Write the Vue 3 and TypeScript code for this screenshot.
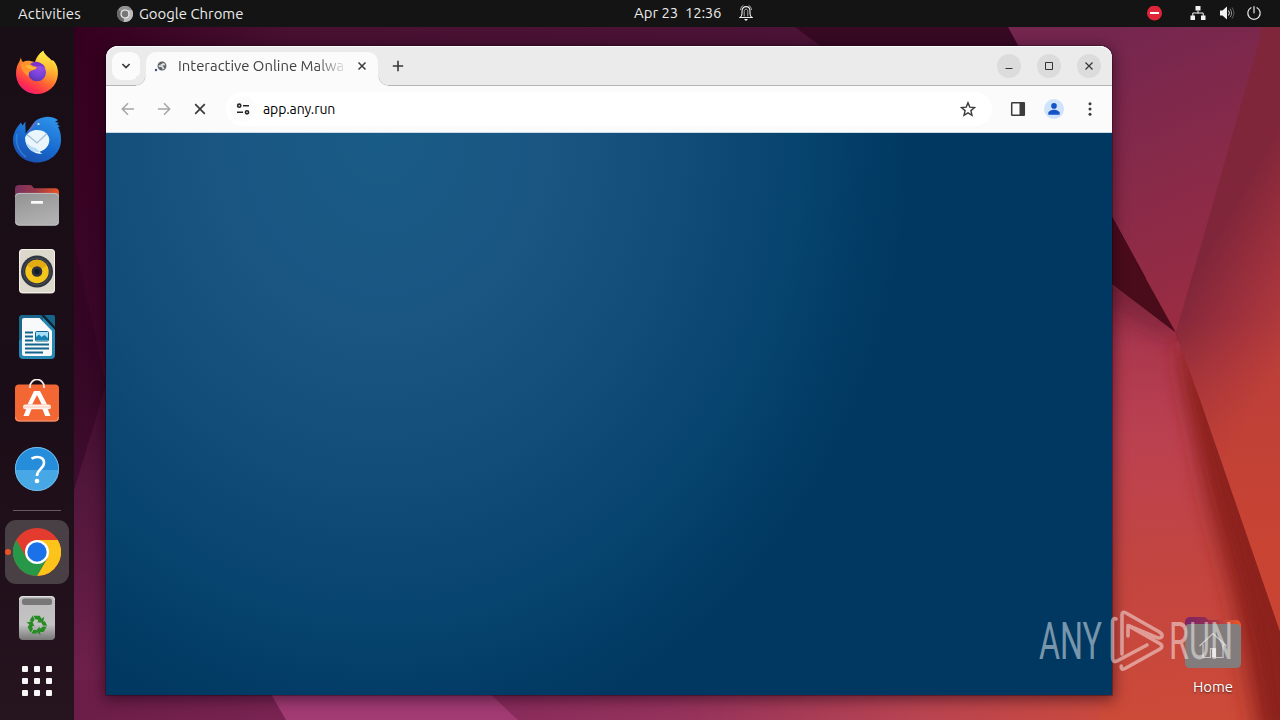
<script setup lang="ts">
interface Shade {
  offset: string
  color: string
}

const clock = { date: 'Apr 23', time: '12:36' }
const appName = 'Google Chrome'
const tabTitle = 'Interactive Online Malwa'
const address = 'app.any.run'

const topStrip: Shade[] = [
  { offset: '0', color: '#35001f' },
  { offset: '0.3', color: '#481031' },
  { offset: '1', color: '#4b1436' },
]
const bottomStrip: Shade[] = [
  { offset: '0', color: '#6b1d47' },
  { offset: '0.35', color: '#85295b' },
  { offset: '0.58', color: '#96335c' },
  { offset: '0.8', color: '#b94451' },
  { offset: '1', color: '#cc4a3b' },
]
const gridCells: number[] = [0, 1, 2, 3, 4, 5, 6, 7, 8]
const turns: number[] = [0, 120, 240]
</script>

<template>
  <div class="desktop">
    <svg class="wallpaper" viewBox="0 0 1280 720" width="1280" height="720" aria-hidden="true">
      <defs>
        <linearGradient id="topStrip" x1="74" x2="800" y1="0" y2="0" gradientUnits="userSpaceOnUse">
          <stop v-for="s in topStrip" :key="s.offset" :offset="s.offset" :stop-color="s.color" />
        </linearGradient>
        <linearGradient id="bottomStrip" x1="74" x2="1130" y1="0" y2="0" gradientUnits="userSpaceOnUse">
          <stop v-for="s in bottomStrip" :key="s.offset" :offset="s.offset" :stop-color="s.color" />
        </linearGradient>
        <linearGradient id="leftStrip" x1="0" x2="0" y1="27" y2="720" gradientUnits="userSpaceOnUse">
          <stop offset="0" stop-color="#36001f" />
          <stop offset="0.45" stop-color="#3b0728" />
          <stop offset="0.65" stop-color="#50163a" />
          <stop offset="1" stop-color="#74224e" />
        </linearGradient>
        <linearGradient id="facet" x1="1080" y1="40" x2="1200" y2="320" gradientUnits="userSpaceOnUse">
          <stop offset="0" stop-color="#74264f" />
          <stop offset="0.5" stop-color="#872a49" />
          <stop offset="1" stop-color="#9a2c42" />
        </linearGradient>
        <linearGradient id="east" x1="1196" y1="270" x2="1302" y2="331" gradientUnits="userSpaceOnUse">
          <stop offset="0" stop-color="#80263a" />
          <stop offset="0.5" stop-color="#9f313d" />
          <stop offset="1" stop-color="#ba3e3b" />
        </linearGradient>
        <linearGradient id="eastFade" x1="0" y1="320" x2="0" y2="560" gradientUnits="userSpaceOnUse">
          <stop offset="0" stop-color="#c94432" stop-opacity="0" />
          <stop offset="1" stop-color="#c94432" />
        </linearGradient>
        <linearGradient id="south" x1="1120" y1="290" x2="1150" y2="720" gradientUnits="userSpaceOnUse">
          <stop offset="0" stop-color="#8b2b42" />
          <stop offset="0.14" stop-color="#ac384e" />
          <stop offset="0.35" stop-color="#bb4150" />
          <stop offset="0.65" stop-color="#c34540" />
          <stop offset="1" stop-color="#cc4a38" />
        </linearGradient>
        <filter id="soft" x="-50%" y="-20%" width="200%" height="140%"><feGaussianBlur stdDeviation="11" /></filter>
        <filter id="softer" x="-50%" y="-20%" width="200%" height="140%"><feGaussianBlur stdDeviation="7" /></filter>
        <clipPath id="southClip"><polygon points="1100,275 1176,333 1200,400 1280,632 1280,720 1100,720" /></clipPath>
      </defs>
      <rect width="1280" height="720" fill="url(#leftStrip)" />
      <polygon points="74,240 106,385 74,490" fill="#2d0420" opacity="0.5" />
      <rect x="74" y="27" width="960" height="30" fill="url(#topStrip)" />
      <polygon points="795,27 1100,27 1112,220 1112,290 1000,180" fill="#370923" />
      <rect x="74" y="680" width="1206" height="40" fill="url(#bottomStrip)" />
      <polygon points="260,675 470,675 518,720 286,720" fill="#a23b74" />
      <polygon points="1008,27 1262,27 1176,333" fill="url(#facet)" />
      <polygon points="1261,27 1280,27 1280,640 1176,333" fill="url(#east)" />
      <polygon points="1176,320 1280,320 1280,640 1176,333" fill="url(#eastFade)" />
      <polygon points="1263,27 1120,333 1176,333" fill="url(#facet)" />
      <polygon points="1100,196 1176,333 1100,276" fill="#4a0c1b" />
      <g clip-path="url(#southClip)">
        <rect x="1100" y="270" width="180" height="450" fill="url(#south)" />
        <polygon points="1100,262 1176,324 1176,340 1100,296" fill="#6c1c35" opacity="0.6" filter="url(#soft)" />
        <polygon points="1176,333 1188,400 1208,500 1234,600 1260,740 1320,740 1300,632 1220,400" fill="#8d211c" filter="url(#soft)" />
        <polygon points="1178,333 1206,450 1238,560 1264,650 1276,740 1320,740 1300,632 1214,400" fill="#8d211b" opacity="0.75" filter="url(#softer)" />
      </g>
    </svg>

    <header class="topbar">
      <div class="bar-left">
        <span class="activities">Activities</span>
        <svg width="16" height="16" viewBox="0 0 16 16">
          <circle cx="8" cy="7.700" r="8" fill="#929292" />
          <path d="M8 8 1.100 4A8 8 0 0 0 6.500 15.900Z" fill="#686868" />
          <path d="M8 8 6.500 15.900A8 8 0 0 0 14.900 4H8Z" fill="#bbb" />
          <circle cx="8" cy="8" r="4" fill="#777" stroke="#f1f1f1" stroke-width="1.200" />
        </svg>
        <span class="app-name">{{ appName }}</span>
      </div>
      <div class="bar-clock">
        <span class="clock-date">{{ clock.date }}</span><span class="clock-time">{{ clock.time }}</span>
        <svg width="14" height="18" viewBox="0 0 14 18" fill="none" stroke="#ededed">
          <path d="M1 13.500q2-1.300 2-4V7c0-5.800 8-5.800 8 0v2.500q0 2.700 2 4Z" stroke-width="1.100" />
          <path d="M5.200 12.500V7.200c0-2.600 3.600-2.600 3.600 0v5.300M1.500 6C1.700 3.800 2.800 2.100 4.400 1.300M12.500 6c-.2-2.200-1.300-3.900-2.900-4.700" stroke-width="0.700" />
          <path d="M5 14.900h4L7 17Z" fill="#fff" stroke="none" />
        </svg>
      </div>
      <div class="bar-status">
        <svg class="no-entry" width="16" height="16" viewBox="0 0 16 16">
          <circle cx="8.500" cy="7" r="7.500" fill="#df2638" /><rect x="4" y="6" width="9" height="2" fill="#fff" />
        </svg>
        <svg class="network" width="16" height="16" viewBox="0 0 16 16" fill="#f2f2f2">
          <path d="M5.500 0h5v4.500H5.500ZM.5 9.500h4.500v4.500H.5Zm10.500 0h4.500v4.500H11Z" />
          <path d="M8 4.500v3M2.800 10V7h10.400v3" fill="none" stroke="#f2f2f2" />
        </svg>
        <svg class="speaker" width="16" height="16" viewBox="0 0 16 16">
          <path d="M1 4.500h2.500L8 .5v13L3.500 9.500H1Z" fill="#f2f2f2" />
          <path d="M9.500 4.500q1.800 2.500 0 5" fill="none" stroke="#e3e3e3" />
          <path d="M11 2.700q3.200 4.300 0 8.600" fill="none" stroke="#8b8b8b" />
          <path d="M13 1.400q3.800 5.600 0 11.200" fill="none" stroke="#5a5a5a" />
        </svg>
        <svg class="power" width="16" height="16" viewBox="0 0 16 16" fill="none" stroke="#e9e9e9" stroke-width="1.200" stroke-linecap="round">
          <path d="M5 1.700a6.200 6.200 0 1 0 6 0M8 .6v6.200" />
        </svg>
      </div>
    </header>

    <nav class="dock">
      <div class="slot">
        <svg width="48" height="48" viewBox="0 0 48 48">
          <defs>
            <linearGradient id="ff" x1="0.8" y1="0.05" x2="0.25" y2="1">
              <stop offset="0" stop-color="#fff44f" /><stop offset="0.3" stop-color="#ffb52c" />
              <stop offset="0.58" stop-color="#ff6a2f" /><stop offset="0.85" stop-color="#ff2a53" /><stop offset="1" stop-color="#e81f78" />
            </linearGradient>
            <linearGradient id="ffTail" x1="0" y1="0" x2="0" y2="1">
              <stop offset="0" stop-color="#fff04a" /><stop offset="0.5" stop-color="#ffbd35" /><stop offset="1" stop-color="#ff7139" stop-opacity="0" />
            </linearGradient>
            <radialGradient id="ffGlobe" cx="0.65" cy="0.25" r="0.8">
              <stop offset="0" stop-color="#9a4ce8" /><stop offset="0.6" stop-color="#7542d8" /><stop offset="1" stop-color="#5a34b0" />
            </radialGradient>
          </defs>
          <path d="M8 8.500c.2 2 .8 3.500 2 4.600 2.300-1.300 5-1.600 8-.9L22 13c1-4.500 4-8.500 8.300-11.200.6 4 5.200 6.300 7.700 9.500 1.500-.2 2.200.2 2.900.8C44 16 45.200 20 44.900 25.500 44 37 35 45 24 45 12 45 3 36 3 24c0-5 1.700-8.800 3.400-11.400Z" fill="url(#ff)" />
          <path d="M23 14c1-5 3.500-9.500 7.300-12.200.6 4 6.600 6.700 9.200 11.200 4 8 2 19-7 24Z" fill="url(#ffTail)" />
          <circle cx="24" cy="23.300" r="9" fill="url(#ffGlobe)" />
          <path d="M16.500 15.500q5-4.500 11-1.500 3 1 5 5-5-3-9-2Z" fill="#7c35c8" />
          <path d="M8 15q6-3 11 1.500l5 1.800q-1 2.700-5 3.200-4 1-3.300 6.200Q8 23 8 15Z" fill="#ff942e" />
          <path d="M12 16.500q5-1 8 1.700l4 .1q-2 1.800-5 2-3 .2-7-3.800Z" fill="#ffbb36" />
        </svg>
      </div>
      <div class="slot">
        <svg width="48" height="48" viewBox="0 0 48 48">
          <defs>
            <linearGradient id="tb" x1="0.8" y1="0" x2="0.3" y2="1"><stop offset="0" stop-color="#2e93ea" /><stop offset="0.6" stop-color="#1768cd" /><stop offset="1" stop-color="#1a4fae" /></linearGradient>
          </defs>
          <path d="M8 7.500C2 14 0 20 0 25c0 13 11 22.500 24 22.500S48 38 48 25c0-6-1-10-3-13l2-.8-3-2 2-1.500-4-.8 3-2C40 2 35 1 30 2.500c-6 1.200-9 3.500-11 9C16 14 14 16 12.500 19 13 15 12 11 12.500 6.500l-3 4Z" fill="url(#tb)" />
          <path d="M4 19c-2 9 2 18 9 23" fill="none" stroke="#49a7f0" stroke-width="1.600" opacity="0.45" />
          <path d="M16 16q2-9 12-11-6 4-8 8l-5 6Z" fill="#6a73c4" opacity="0.7" />
          <path d="M12 22.500C15 17 19 15 24 15c8 0 12.300 5 12.300 10S33 35 27 36.500c.5 1.500 1.500 2 2.500 2.500C20 39 12 33 12 22.500Z" fill="#eaf5fc" />
          <path d="m14 19.500 10 8.500 10-9.500" fill="none" stroke="#a5bed8" stroke-width="1.300" />
          <path d="M13 27q4 5 10 6l4 4q-12 1-14-10Z" fill="#b9dcf7" />
          <circle cx="25.500" cy="9" r="1.100" fill="#dff1ff" />
        </svg>
      </div>
      <div class="slot">
        <svg width="48" height="48" viewBox="0 0 48 48">
          <defs>
            <linearGradient id="back" x1="0" x2="1" y1="0" y2="0"><stop offset="0" stop-color="#76305e" /><stop offset="0.45" stop-color="#97384b" /><stop offset="1" stop-color="#e95422" /></linearGradient>
            <linearGradient id="front" x1="0" x2="0.4" y1="0" y2="1"><stop offset="0" stop-color="#929292" /><stop offset="1" stop-color="#b0b0b0" /></linearGradient>
          </defs>
          <path d="M2 8a4 4 0 0 1 4-4h11q2 0 3 2l1 1.200h21a4 4 0 0 1 4 4V20H2Z" fill="url(#back)" />
          <rect x="2" y="12" width="44" height="32.500" rx="4" fill="url(#front)" />
          <path d="M2.300 15.500Q3 12.400 6 12.400h36q3 0 3.700 3.100M2.600 41q1 3.200 3.400 3.200h36q2.500 0 3.500-3.200" fill="none" stroke="#c9c9c9" stroke-width="0.800" />
          <rect x="18" y="20" width="12" height="2.800" rx="0.500" fill="#fafafa" />
        </svg>
      </div>
      <div class="slot">
        <svg width="48" height="48" viewBox="0 0 48 48">
          <rect x="6" y="2" width="36" height="44.500" rx="4" fill="#dcd8cc" />
          <rect x="6.500" y="2.500" width="35" height="43" rx="3.500" fill="none" stroke="#f2efe6" />
          <circle cx="24" cy="24.500" r="16" fill="#303641" />
          <circle cx="24" cy="24.500" r="13.500" fill="none" stroke="#4a4e56" />
          <circle cx="24" cy="24.500" r="11.700" fill="#f6c51c" />
          <path d="M24 24.500 14 18.500A11.700 11.700 0 0 1 34 18.500Z" fill="#e2ab12" />
          <circle cx="24" cy="24.500" r="5.300" fill="#2b323e" /><circle cx="24" cy="24.500" r="2.700" fill="#151c29" />
        </svg>
      </div>
      <div class="slot">
        <svg width="48" height="48" viewBox="0 0 48 48">
          <path d="M10 2h18l14 14v26a4 4 0 0 1-4 4H10a4 4 0 0 1-4-4V6a4 4 0 0 1 4-4Z" fill="#2888b4" />
          <path d="M6 6a4 4 0 0 1 4-4h20v8L6 28Z" fill="#1b668b" />
          <path d="M11 5h15.500L39 18v23a2 2 0 0 1-2 2H11a2 2 0 0 1-2-2V7a2 2 0 0 1 2-2Z" fill="#f7f9fa" />
          <path d="M31 2h9q2 0 2 2v10Z" fill="#17658a" /><path d="M28 2h3l11 12v3Z" fill="#0a2533" />
          <path d="M12 19.500h8M12 23.500h8M12 27.500h8M12 31.500h24M12 35.500h24M12 39.500h18" stroke="#13658c" stroke-width="1.800" />
          <rect x="22.500" y="18.500" width="13" height="9.500" rx="1" fill="#a4def7" stroke="#13658c" />
          <path d="M23 27v-3l3-2.500 2.500 2.500 3-2 3.500 3v2Z" fill="#1682b4" />
        </svg>
      </div>
      <div class="slot">
        <svg width="48" height="48" viewBox="0 0 48 48">
          <rect x="2" y="5.500" width="44" height="37" rx="4" fill="#f26733" />
          <path d="M2.500 38q0 4 3.500 4h36q3.500 0 3.500-4" fill="none" stroke="#f9a17f" stroke-width="0.900" />
          <path d="M17 9V7.500a7 7 0 0 1 14 0V9" fill="none" stroke="#f9eee9" stroke-width="1.700" />
          <path d="M21 12h6l7 13.500h-5.200L24 16 19.200 25.500H14.500Z" fill="#fff" />
          <path d="m13.500 29.500-3 7.500h5.300l3-7.500ZM29.200 29.500l3 7.500h5.300l-3-7.500Z" fill="#fff" />
          <rect x="10" y="25.500" width="28" height="4.800" rx="2.300" fill="#fff3ed" />
          <path d="M10.500 28h27" stroke="#f5b69e" stroke-width="0.700" />
        </svg>
      </div>
      <div class="slot">
        <svg width="48" height="48" viewBox="0 0 48 48">
          <circle cx="24" cy="24" r="22" fill="#48a8e6" /><path d="M2 25a22 22 0 0 1 44 0Z" fill="#268dda" />
          <circle cx="24" cy="24" r="21.600" fill="none" stroke="#7bc0ee" stroke-width="0.800" />
          <path d="M18.500 13.700q2.700-1.700 5.500-1.700c5 0 7 2.500 7 5.800 0 6-7 6.400-7 13.200" fill="none" stroke="#fff" stroke-width="2.600" />
          <circle cx="24" cy="36" r="2.300" fill="#fff" />
        </svg>
      </div>
      <div class="separator"></div>
      <div class="slot">
        <div class="tile">
          <i class="running"></i>
          <svg width="48" height="48" viewBox="0 0 48 48">
            <circle cx="24" cy="24" r="24" fill="#e33b2e" />
            <path d="M24 12h20.800A24 24 0 0 1 24 48l10.400-18Z" fill="#fcc31a" />
            <path d="M13.600 30 3.200 12A24 24 0 0 0 24 48l10.400-18Z" fill="#279847" />
            <circle cx="24" cy="24" r="12" fill="#fff" /><circle cx="24" cy="24" r="9.700" fill="#1b72e8" />
          </svg>
        </div>
      </div>
      <div class="slot">
        <svg width="48" height="48" viewBox="0 0 48 48">
          <defs><linearGradient id="bin" x1="0" x2="0" y1="0" y2="1"><stop offset="0" stop-color="#bdbdbd" /><stop offset="0.65" stop-color="#c3c3c3" /><stop offset="1" stop-color="#777" /></linearGradient></defs>
          <rect x="6" y="2" width="36" height="44" rx="4" fill="url(#bin)" />
          <path d="M6.500 6q0-3.500 3.500-3.500h28q3.500 0 3.500 3.500" fill="none" stroke="#e2e2e2" />
          <rect x="9" y="4.500" width="30" height="6.500" rx="2.500" fill="#777" />
          <g v-for="t in turns" :key="t" :transform="`rotate(${t} 24 31)`">
            <path d="m18.300 27.300 2.300-3.600h5l1.600 2.600" fill="none" stroke="#258b22" stroke-width="3.800" />
            <path d="m24 28.200 6 .6 1.200-6Z" fill="#258b22" />
            <path d="m19.800 21.400 2.900 5.200" stroke="#bdbdbd" stroke-width="0.800" />
          </g>
        </svg>
      </div>
      <div class="slot apps">
        <div class="apps-grid"><i v-for="c in gridCells" :key="c"></i></div>
      </div>
    </nav>

    <section class="window">
      <div class="titlebar">
        <button class="tab-search">
          <svg width="10" height="8" viewBox="0 0 10 8"><path d="m1.400 2 3.600 3.600L8.600 2" fill="none" stroke="#383838" stroke-width="1.700" /></svg>
        </button>
        <div class="tab">
          <svg class="favicon" width="18" height="16" viewBox="0 0 18 16">
            <circle cx="10" cy="8" r="3.900" fill="#dcddde" stroke="#5b6066" stroke-width="1.100" />
            <path d="M6.500 6.500q1.500-2.800 4.500-2.700l-.7 2-1.700.4-.3 1.500Zm.3 2.800q2-.6 3.700.6l-.7 2q-2.200 0-3-2.600ZM10.500 7.500l3.300-.3q0 2.500-1.600 3.600l-.5-1.800Z" fill="#5b6066" />
            <circle cx="4" cy="12" r="1.200" fill="#3e4a82" />
          </svg>
          <span class="tab-title">{{ tabTitle }}</span>
          <svg class="tab-close" width="10" height="10" viewBox="0 0 10 10"><path d="m1.500 1.500 7 7m0-7-7 7" stroke="#3a3a3a" stroke-width="1.500" /></svg>
        </div>
        <button class="new-tab">
          <svg width="12" height="12" viewBox="0 0 12 12"><path d="M6 .8v10.400M.8 6h10.400" stroke="#383838" stroke-width="1.600" /></svg>
        </button>
        <div class="controls">
          <span><svg width="10" height="10" viewBox="0 0 10 10"><path d="M1.500 7.500h7" stroke="#333" /></svg></span>
          <span><svg width="10" height="10" viewBox="0 0 10 10"><path d="M1.500 1.500h7v7h-7Z" stroke="#333" fill="none" /></svg></span>
          <span><svg width="10" height="10" viewBox="0 0 10 10"><path d="m1.500 1.500 7 7m0-7-7 7" stroke="#333" stroke-width="1.200" /></svg></span>
        </div>
      </div>
      <div class="toolbar">
        <button><svg width="16" height="16" viewBox="0 0 16 16" fill="none" stroke="#a6a6a6" stroke-width="1.500"><path d="M14 8H2.800M8 2.300 2.300 8 8 13.700" /></svg></button>
        <button><svg width="16" height="16" viewBox="0 0 16 16" fill="none" stroke="#a6a6a6" stroke-width="1.500"><path d="M2 8h11.200M8 2.300 13.700 8 8 13.700" /></svg></button>
        <button><svg width="12" height="12" viewBox="0 0 12 12"><path d="m1.200 1.200 9.600 9.600m0-9.600-9.600 9.600" stroke="#3a3a3a" stroke-width="1.700" /></svg></button>
        <div class="address">
          <span class="site-info">
            <svg width="16" height="16" viewBox="0 0 16 16" fill="none" stroke="#262626" stroke-width="1.600"><circle cx="4.200" cy="4.700" r="1.600" /><path d="M8 4.700h6M2 11.300h6" /><circle cx="12" cy="11.300" r="1.600" /></svg>
          </span>
          <span class="url">{{ address }}</span>
          <svg class="star" width="16" height="16" viewBox="0 0 16 16"><path d="m8 1.700 1.800 4.400 4.700.4-3.600 3.100 1.100 4.700L8 11.800l-4 2.500 1.100-4.700-3.600-3.100 4.700-.4Z" fill="none" stroke="#3c3c3c" stroke-width="1.400" /></svg>
        </div>
        <button><svg width="16" height="16" viewBox="0 0 16 16"><rect x="1.700" y="1.700" width="12.600" height="12.600" rx="0.500" fill="none" stroke="#3c3c3c" stroke-width="1.500" /><path d="M9.500 1.500h5v13h-5Z" fill="#3c3c3c" /></svg></button>
        <button><svg width="20" height="20" viewBox="0 0 20 20"><circle cx="10" cy="10" r="10" fill="#d0e3fc" /><circle cx="10" cy="6.900" r="2.800" fill="#1253c8" /><path d="M4.300 15.800v-1.700c0-2 3.300-3.300 5.700-3.300s5.700 1.300 5.700 3.300v1.700Z" fill="#1253c8" /></svg></button>
        <button><svg width="4" height="16" viewBox="0 0 4 16" fill="#3a3a3a"><circle cx="2" cy="2.700" r="1.500" /><circle cx="2" cy="8" r="1.500" /><circle cx="2" cy="13.300" r="1.500" /></svg></button>
      </div>
      <div class="page"></div>
    </section>

    <div class="home">
      <svg width="56" height="52" viewBox="0 0 56 52">
        <defs><linearGradient id="homeBack" x1="0" x2="1" y1="0" y2="0"><stop offset="0" stop-color="#7d2468" /><stop offset="0.35" stop-color="#8e2c55" /><stop offset="1" stop-color="#f05724" /></linearGradient></defs>
        <path d="M0 5a5 5 0 0 1 5-5h14q2 0 3.500 2l1.500 1H51a5 5 0 0 1 5 5v9H0Z" fill="url(#homeBack)" />
        <rect y="7" width="56" height="44" rx="4.500" fill="#827d7c" />
        <path d="M14.500 29 28 16.500 41.500 29M18 27v13.500h7.500v-9h5v9H38V27" fill="none" stroke="#cbc6c4" stroke-width="1.200" />
        <path d="M27 31.500h4v9h-4Z" fill="#dedbd9" />
      </svg>
      <span>Home</span>
    </div>

    <svg class="watermark" width="220" height="90" viewBox="-5 -12 220 90">
      <g fill="#fff" fill-opacity="0.48" font-family="Roboto, sans-serif" font-weight="400" font-size="52">
        <text x="4" y="51" textLength="63" lengthAdjust="spacingAndGlyphs">ANY</text>
        <text x="134" y="51" textLength="64" lengthAdjust="spacingAndGlyphs">RUN</text>
      </g>
      <g fill="none" stroke="#fff" stroke-opacity="0.46" stroke-width="3.600" stroke-linecap="round" stroke-linejoin="round">
        <path d="M87 46V7Q87 2.800 91 5L124.500 24Q129 27.500 126 29.500Q124 30.700 121 29.200L93 17.500M81 11Q77.500 9.500 77.500 14V49Q77.500 55.500 83 52.500L112 37M93 28V17.500L125.500 36Q128.500 38.500 125 41L90 60.500Q86 62.500 86.200 58" />
      </g>
    </svg>
  </div>
</template>

<style>
html,
body {
  margin: 0;
  overflow: hidden;
  background: #131313;
}
</style>

<style scoped>
.desktop {
  position: relative;
  display: flex;
  flex-direction: column;
  width: 1280px;
  height: 720px;
  overflow: hidden;
  font-family: Ubuntu, 'Noto Sans', 'Open Sans', sans-serif;
  font-size: 14.9px;
}
svg {
  display: block;
  flex: none;
}
.wallpaper {
  position: absolute;
  inset: 0;
}
.topbar {
  position: relative;
  display: flex;
  height: 27px;
  flex: none;
  background: #131413;
  color: #ebebeb;
  line-height: 26px;
  white-space: pre;
}
.bar-left {
  display: flex;
  align-items: center;
  box-sizing: border-box;
  width: 634px;
  padding-left: 18px;
}
.activities {
  width: 99px;
  letter-spacing: 0.17px;
}
.app-name {
  margin-left: 6px;
}
.bar-clock {
  display: flex;
  align-items: center;
  height: 26px;
}
.clock-date {
  width: 51px;
}
.clock-time {
  width: 54px;
  letter-spacing: -0.2px;
}
.bar-status {
  display: flex;
  align-items: center;
  margin-left: auto;
  padding-right: 18px;
}
.no-entry {
  margin-right: 28px;
}
.network {
  margin-right: 13px;
}
.speaker {
  margin-right: 11px;
}
.dock {
  position: relative;
  box-sizing: border-box;
  width: 74px;
  flex: 1;
  padding-top: 13px;
  background: linear-gradient(#190e16, #1b0d17 55%, #26141f);
}
.slot {
  display: flex;
  align-items: center;
  justify-content: center;
  height: 66px;
}
.separator {
  width: 48px;
  height: 1px;
  margin: 8px auto;
  background: #665b62;
}
.tile {
  position: relative;
  display: flex;
  align-items: center;
  justify-content: center;
  width: 64px;
  height: 64px;
  border-radius: 11px;
  background: #484045;
}
.running {
  position: absolute;
  left: 0;
  top: 29px;
  width: 6px;
  height: 6px;
  border-radius: 3px;
  background: #e95420;
}
.apps {
  height: 60px;
}
.apps-grid {
  display: grid;
  grid-template-columns: repeat(3, 6px);
  gap: 6px;
}
.apps-grid i {
  height: 6px;
  border-radius: 1px;
  background: #f8f6f7;
}
.window {
  position: absolute;
  left: 106px;
  top: 46px;
  display: flex;
  flex-direction: column;
  width: 1006px;
  height: 649px;
  border-radius: 12px 12px 0 0;
  background: #fbfbfb;
  box-shadow: 0 0 0 1px rgba(20, 0, 15, 0.3), 0 3px 14px 2px rgba(20, 0, 15, 0.5);
}
.titlebar {
  display: flex;
  box-sizing: border-box;
  height: 40px;
  flex: none;
  padding: 6px 11px 0 6px;
  border-radius: 12px 12px 0 0;
  background: #ebebeb;
  box-shadow: inset 0 1px #fff, inset 0 -1px #b6b6b6;
}
button {
  display: flex;
  align-items: center;
  justify-content: center;
  padding: 0;
  border: 0;
  background: none;
}
.tab-search {
  width: 28px;
  height: 28px;
  border-radius: 9px;
  background: #fbfbfb;
}
.tab {
  position: relative;
  display: flex;
  box-sizing: border-box;
  align-items: center;
  width: 232px;
  height: 34px;
  margin-left: 6px;
  padding: 0 0 6px 6px;
  border-radius: 10px 10px 0 0;
  background: #fbfbfb;
}
.tab::before,
.tab::after {
  content: '';
  position: absolute;
  bottom: 0;
  width: 10px;
  height: 10px;
}
.tab::before {
  left: -10px;
  background: radial-gradient(circle at 0 0, #ebebeb 8.5px, #d2d2d2 9.2px, #fbfbfb 10px);
}
.tab::after {
  right: -10px;
  background: radial-gradient(circle at 100% 0, #ebebeb 8.5px, #d2d2d2 9.2px, #fbfbfb 10px);
}
.tab-title {
  width: 169px;
  margin-left: 8px;
  color: #414141;
  font-size: 14.9px;
  line-height: 28px;
  white-space: nowrap;
  mask-image: linear-gradient(90deg, #000 138px, transparent 170px);
}
.tab-close {
  margin-left: 10px;
}
.new-tab {
  width: 28px;
  height: 28px;
  margin-left: 6px;
}
.controls {
  display: flex;
  gap: 16px;
  margin: 2px 0 0 auto;
}
.controls span {
  display: flex;
  align-items: center;
  justify-content: center;
  width: 24px;
  height: 24px;
  border-radius: 50%;
  background: #dcdcdc;
}
.toolbar {
  display: flex;
  box-sizing: border-box;
  align-items: center;
  height: 47px;
  flex: none;
  padding: 0 4px;
  border-bottom: 1px solid #c9dbe6;
}
.toolbar button {
  width: 36px;
  height: 36px;
}
.address {
  display: flex;
  align-items: center;
  flex: 1;
  height: 34px;
  margin: 0 8px;
  border-radius: 17px;
  background: #fff;
}
.site-info {
  display: flex;
  align-items: center;
  justify-content: center;
  width: 26px;
  height: 26px;
  margin-left: 4px;
  border-radius: 13px;
  background: #fcfcfc;
}
.url {
  margin-left: 7px;
  color: #000;
  font-size: 14px;
  letter-spacing: -0.1px;
  line-height: 32px;
}
.star {
  margin-left: auto;
  margin-right: 16px;
}
.page {
  flex: 1;
  background: radial-gradient(530px 620px at 275px 0, #185b86 0, #1b5683 30%, #114b77 58%, #06436d 80%, #003861 100%);
}
.home {
  position: absolute;
  left: 1185px;
  top: 617px;
  display: flex;
  flex-direction: column;
  align-items: center;
  width: 56px;
  color: #fff;
  text-shadow: 0 1px 2px rgba(0, 0, 0, 0.6);
}
.home span {
  margin-top: 8px;
  line-height: 20px;
}
.watermark {
  position: absolute;
  left: 1030px;
  top: 596px;
}
</style>
